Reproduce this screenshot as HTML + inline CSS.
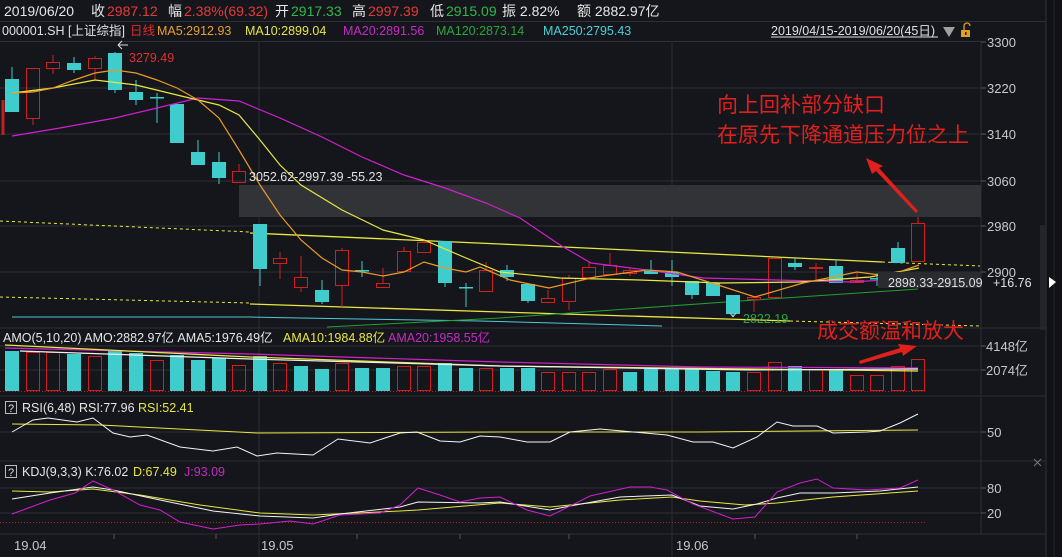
<!DOCTYPE html>
<html><head><meta charset="utf-8"><style>
html,body{margin:0;padding:0;background:#15161b;overflow:hidden}
svg{display:block}
text{font-family:"Liberation Sans","Noto Sans CJK SC",sans-serif}
</style></head><body>
<svg id="s" width="1062" height="557" viewBox="0 0 1062 557" xmlns="http://www.w3.org/2000/svg">
<rect width="1062" height="557" fill="#15161b"/>
<rect x="1046" y="0" width="16" height="557" fill="#111216"/>
<line x1="1046" y1="0" x2="1046" y2="557" stroke="#2e3036"/>
<line x1="1054" y1="0" x2="1054" y2="557" stroke="#24262b"/>
<rect x="1040" y="225" width="6" height="105" fill="#24252a"/>
<!-- header -->
<g font-size="14">
<text x="4" y="16" fill="#e6e6e6">2019/06/20</text>
<text x="91" y="16" fill="#e6e6e6">收</text><text x="107" y="16" fill="#e53a3a">2987.12</text>
<text x="168" y="16" fill="#e6e6e6">幅</text><text x="184" y="16" fill="#e53a3a">2.38%(69.32)</text>
<text x="275" y="16" fill="#e6e6e6">开</text><text x="291" y="16" fill="#2fb84a">2917.33</text>
<text x="352" y="16" fill="#e6e6e6">高</text><text x="368" y="16" fill="#e53a3a">2997.39</text>
<text x="430" y="16" fill="#e6e6e6">低</text><text x="446" y="16" fill="#2fb84a">2915.09</text>
<text x="502" y="16" fill="#e6e6e6">振 2.82%</text>
<text x="577" y="16" fill="#e6e6e6">额 2882.97亿</text>
</g>
<line x1="0" y1="21.5" x2="1046" y2="21.5" stroke="#2e3036"/>
<g font-size="12.5">
<text x="2" y="35" fill="#e0e0e0">000001.SH [上证综指]</text>
<text x="130" y="35" fill="#e02a2a">日线</text>
<text x="157" y="35" fill="#e8a030">MA5:2912.93</text>
<text x="245" y="35" fill="#e6e640">MA10:2899.04</text>
<text x="343" y="35" fill="#c828c8">MA20:2891.56</text>
<text x="436" y="35" fill="#28a838">MA120:2873.14</text>
<text x="543" y="35" fill="#48d0d8">MA250:2795.43</text>
<text x="771" y="35" fill="#e0e0e0">2019/04/15-2019/06/20(45日)</text>
</g>
<line x1="771" y1="37" x2="938" y2="37" stroke="#e0e0e0"/>
<polygon points="943,27 955,27 949,37" fill="#a0a0a0"/>
<rect x="961" y="30" width="9" height="7" fill="#e0a020"/>
<path d="M964 30 V26 A3 3 0 0 1 970 26" stroke="#e0a020" fill="none" stroke-width="1.3"/>
<rect x="965" y="32" width="1.5" height="3" fill="#222"/>
<line x1="0" y1="41.5" x2="981" y2="41.5" stroke="#2e3036"/>
<!-- grid -->
<g stroke="#2b2d33" stroke-width="1">
<line x1="0" y1="88" x2="981" y2="88"/><line x1="0" y1="134" x2="981" y2="134"/>
<line x1="0" y1="181" x2="981" y2="181"/><line x1="0" y1="226" x2="981" y2="226"/>
<line x1="0" y1="272" x2="981" y2="272"/>
<line x1="0" y1="328" x2="1046" y2="328"/><line x1="0" y1="396" x2="1046" y2="396"/>
<line x1="0" y1="461" x2="1046" y2="461"/><line x1="0" y1="534" x2="1046" y2="534"/>
<line x1="0" y1="346" x2="981" y2="346"/><line x1="0" y1="370" x2="981" y2="370"/>
<line x1="0" y1="432" x2="981" y2="432"/>
<line x1="0" y1="488" x2="981" y2="488"/><line x1="0" y1="513" x2="981" y2="513"/>
<line x1="259" y1="41" x2="259" y2="557"/><line x1="672" y1="41" x2="672" y2="557"/>
<line x1="981" y1="41" x2="981" y2="534"/>
</g>
<g stroke="#55575d">
<line x1="981" y1="42" x2="986" y2="42"/><line x1="981" y1="88" x2="986" y2="88"/><line x1="981" y1="134" x2="986" y2="134"/><line x1="981" y1="181" x2="986" y2="181"/><line x1="981" y1="226" x2="986" y2="226"/><line x1="981" y1="272" x2="986" y2="272"/><line x1="981" y1="346" x2="986" y2="346"/><line x1="981" y1="370" x2="986" y2="370"/><line x1="981" y1="432" x2="986" y2="432"/><line x1="981" y1="488" x2="986" y2="488"/><line x1="981" y1="513" x2="986" y2="513"/>
<line x1="114" y1="534" x2="114" y2="539"/><line x1="216" y1="534" x2="216" y2="539"/><line x1="357" y1="534" x2="357" y2="539"/><line x1="460" y1="534" x2="460" y2="539"/><line x1="569" y1="534" x2="569" y2="539"/><line x1="755" y1="534" x2="755" y2="539"/><line x1="857" y1="534" x2="857" y2="539"/>
</g>
<line x1="3" y1="100" x2="3" y2="135" stroke="#c02020" stroke-width="3"/>
<!-- axis labels -->
<g font-size="13" fill="#c8c8c8">
<text x="987" y="47">3300</text><text x="987" y="93">3220</text><text x="987" y="139">3140</text>
<text x="987" y="186">3060</text><text x="987" y="231">2980</text><text x="987" y="277">2900</text>
<text x="986" y="351">4148亿</text><text x="986" y="375">2074亿</text>
<text x="987" y="437">50</text><text x="987" y="493">80</text><text x="987" y="518">20</text>
<text x="14" y="550">19.04</text><text x="261" y="550">19.05</text><text x="676" y="550">19.06</text>
</g>
<path d="M1034 459 l7 7 M1041 459 l-7 7" stroke="#777" stroke-width="1"/>
<!-- gap band -->
<rect x="239" y="185" width="742" height="32" fill="#323337"/>
<!-- channel lines -->
<polyline points="0,221 250,232" stroke="#e8e840" stroke-dasharray="3,3" fill="none"/>
<polyline points="250,233 500,244 882,262" stroke="#e8e840" stroke-width="1.3" fill="none"/>
<polyline points="882,262 980,266" stroke="#e8e840" stroke-dasharray="3,3" fill="none"/>
<polyline points="0,297 250,303" stroke="#e8e840" stroke-dasharray="3,3" fill="none"/>
<polyline points="250,304 500,312 790,321" stroke="#e8e840" stroke-width="1.3" fill="none"/>
<polyline points="790,321 980,326" stroke="#e8e840" stroke-dasharray="3,3" fill="none"/>
<!-- MA250, MA120 -->
<polyline points="12,317 250,317 300,318 480,321 662,326" stroke="#50c8d8" fill="none"/>
<polyline points="327,327 500,318 740,301 918,289" stroke="#20a030" fill="none"/>
<g id="candles"></g>
<!-- MAs -->
<polyline points="12,136 60,128 115,118 157,108 198,98 239,101 280,118 322,137 362,157 404,175 445,188 486,203 520,218 560,245 591,263 647,270 703,278 777,280 851,282 918,278" stroke="#d020d0" stroke-width="1.2" fill="none"/>
<polyline points="12,93 53,88 95,80 136,85 177,95 219,105 239,115 260,140 280,165 301,185 342,210 383,230 424,240 466,258 500,272 560,278 640,280 720,283 800,282 870,277 919,268" stroke="#e8e840" stroke-width="1.2" fill="none"/>
<polyline points="12,93 33,92 53,88 74,80 95,73 115,70 136,73 157,80 177,88 198,100 219,118 239,150 260,185 280,215 301,240 322,258 342,270 362,272 383,276 404,272 424,262 445,268 466,272 480,267 510,280 549,288 595,277 647,270 677,272 718,285 755,297 803,283 857,272 888,276 919,265" stroke="#e89a28" stroke-width="1.2" fill="none"/>
<!-- labels on chart -->
<path d="M118 45 l4 -4 M118 45 l4 4 M118 45 h10" stroke="#ddd" fill="none"/>
<text x="129" y="62" font-size="12.5" fill="#e03030">3279.49</text>
<text x="249" y="181" font-size="12.5" fill="#e0e0e0">3052.62-2997.39   -55.23</text>
<rect x="878" y="272" width="103" height="16" fill="#2a2b2f"/>
<text x="888" y="287" font-size="12.5" fill="#e0e0e0">2898.33-2915.09</text>
<text x="993" y="287" font-size="12.5" fill="#e0e0e0">+16.76</text>
<polygon points="1049,277 1056,282 1049,288" fill="#fff"/>
<path d="M733 317 l-3 -4 M733 317 l3 -4" stroke="#ccc"/>
<text x="743" y="323" font-size="12.5" fill="#2aa840">2822.19</text>
<!-- annotations -->
<g font-size="21" fill="#e0201c">
<text x="717" y="112">向上回补部分缺口</text>
<text x="717" y="142">在原先下降通道压力位之上</text>
<text x="817" y="338">成交额温和放大</text>
</g>
<polygon points="866,158 883,166 879,168 918,211 916,213 876,171 872,174" fill="#e0201c"/>
<polygon points="917,346 903,356 902,352 860,364 859,361 900,348 898,344" fill="#e0201c"/>
<!-- AMO -->
<g id="bars"></g>
<line x1="0" y1="391.5" x2="925" y2="391.5" stroke="#b02020" stroke-dasharray="1,2"/>
<polyline points="5,348 250,354 500,362 700,367 918,368" stroke="#d020d0" fill="none" stroke-width="1.2"/>
<polyline points="5,345 250,357 500,366 918,371" stroke="#e8e840" fill="none" stroke-width="1.2"/>
<polyline points="20,351 250,359 500,366 750,370 918,369" stroke="#f0f0f0" fill="none" stroke-width="1.2"/>
<g font-size="12.5">
<text x="3" y="342" fill="#e6e6e6">AMO(5,10,20) AMO:2882.97亿  AMA5:1976.49亿</text>
<text x="283" y="342" fill="#e6e640">AMA10:1984.88亿</text>
<text x="388" y="342" fill="#c828c8">AMA20:1958.55亿</text>
</g>
<!-- RSI -->
<rect x="5.5" y="401.5" width="11" height="12" fill="none" stroke="#bbb"/>
<text x="8" y="412" font-size="11" fill="#ddd">?</text>
<g font-size="12.5">
<text x="22" y="412" fill="#e6e6e6">RSI(6,48) RSI:77.96</text>
<text x="138" y="412" fill="#e6e640">RSI:52.41</text>
</g>
<polyline points="12,424 100,425 257,433 500,432 700,432 918,430" stroke="#e8e840" fill="none"/>
<polyline points="12,432 33,420 48,418 77,422 93,418 113,433 130,437 147,435 180,447 213,451 237,447 257,456 277,453 313,455 338,439 370,443 400,433 417,432 440,441 460,442 480,436 500,437 527,442 550,442 570,432 600,429 633,432 667,435 693,442 713,442 733,448 757,437 777,422 793,426 817,426 833,433 867,432 880,431 900,423 918,414" stroke="#f4f4f4" fill="none"/>
<!-- KDJ -->
<rect x="5.5" y="465.5" width="11" height="12" fill="none" stroke="#bbb"/>
<text x="8" y="476" font-size="11" fill="#ddd">?</text>
<g font-size="12.5">
<text x="22" y="476" fill="#e6e6e6">KDJ(9,3,3) K:76.02</text>
<text x="133" y="476" fill="#e6e640">D:67.49</text>
<text x="184" y="476" fill="#c828c8">J:93.09</text>
</g>
<line x1="0" y1="522.5" x2="925" y2="522.5" stroke="#b02020" stroke-dasharray="1,2"/>
<polyline points="12,491 50,492 93,489 140,495 200,505 260,513 313,515 400,511 418,510 500,503 550,507 620,500 672,497 700,501 745,505 777,503 833,497 918,491" stroke="#e8e840" fill="none"/>
<polyline points="12,499 50,493 93,487 113,490 160,500 213,511 260,516 313,518 340,514 400,507 418,502 480,503 500,502 550,510 570,506 620,497 672,495 700,506 733,509 757,504 777,498 800,493 833,493 880,491 918,487" stroke="#f4f4f4" fill="none"/>
<polyline points="12,514 50,500 75,493 93,481 113,490 140,505 160,510 180,522 213,529 240,525 260,524 290,521 313,524 340,515 380,513 400,505 418,488 440,495 460,502 480,498 500,497 527,510 550,516 590,496 630,487 650,487 667,490 693,504 733,519 755,517 777,492 800,483 817,479 833,488 867,490 900,488 918,480" stroke="#d020d0" fill="none"/>
</svg>
<script>
var C="#3ecccc",R="#d0201e",NS="http://www.w3.org/2000/svg";
var d=[[12,67,112,79,112,'c'],[33,68,125,68,119,'r'],[53,55,74,62,69,'r'],[74,57,73,63,70,'c'],[95,56,80,58,69,'r'],[115,52,93,53,90,'c'],[136,80,105,92,100,'c'],[157,93,123,97,98,'c'],[177,104,143,104,143,'c'],[198,140,165,152,165,'c'],[219,152,184,162,178,'c'],[239,164,183,171,183,'r'],[260,224,286,224,269,'c'],[280,252,279,258,264,'r'],[301,256,292,277,288,'r'],[322,280,304,290,302,'c'],[342,248,307,250,286,'r'],[362,261,277,270,271,'c'],[383,268,288,283,288,'r'],[404,247,272,251,272,'r'],[424,240,253,242,253,'r'],[445,241,287,241,283,'c'],[466,283,307,287,288,'c'],[486,262,292,270,292,'r'],[507,265,281,270,277,'c'],[528,284,303,284,301,'c'],[548,290,303,298,303,'r'],[569,275,310,278,302,'r'],[589,262,278,267,278,'r'],[610,253,275,265,275,'r'],[630,268,276,270,274,'r'],[651,260,274,271,274,'c'],[672,260,286,272,277,'c'],[692,281,299,281,295,'c'],[713,283,296,283,296,'c'],[733,295,317,295,314,'c'],[754,297,312,297,300,'r'],[775,258,298,258,298,'r'],[795,258,270,263,267,'c'],[816,263,280,267,269,'r'],[836,259,283,266,283,'c'],[857,273,283,280,283,'r'],[877,273,286,278,279,'c'],[898,242,263,248,263,'c'],[918,217,262,223,262,'r']];
var g=document.getElementById('candles');
function el(t,a,p){var e=document.createElementNS(NS,t);for(var k in a)e.setAttribute(k,a[k]);p.appendChild(e);return e;}
d.forEach(function(c){var col=c[5]=='c'?C:R;var x=c[0];
 if(c[5]=='c'){el('line',{x1:x,y1:c[1],x2:x,y2:c[2],stroke:col},g);el('rect',{x:x-7,y:c[3],width:14,height:Math.max(1.5,c[4]-c[3]),fill:col},g);}
 else{el('line',{x1:x,y1:c[1],x2:x,y2:c[3],stroke:col},g);el('line',{x1:x,y1:c[4],x2:x,y2:c[2],stroke:col},g);el('rect',{x:x-6.5,y:c[3]+.5,width:13,height:Math.max(1,c[4]-c[3]-1),fill:'none',stroke:col},g);}
});
var v="C351 R352 R352 C354 R356 C351 C353 R360 C355 C360 C358 R365 C356 R363 C366 C369 R363 C368 C368 R366 R366 C363 C368 R368 C368 C368 R372 R372 R372 R369 C372 C369 C369 C369 C371 C372 R372 R362 C366 R369 C369 R375 R375 R366 R359".split(' ');
var b=document.getElementById('bars');
v.forEach(function(s,i){var x=d[i][0],t=+s.slice(1);
 if(s[0]=='C')el('rect',{x:x-7,y:t,width:14,height:391-t,fill:C},b);
 else el('rect',{x:x-6.5,y:t+.5,width:13,height:391-t-1,fill:'none',stroke:R},b);});
</script>
</body></html>
